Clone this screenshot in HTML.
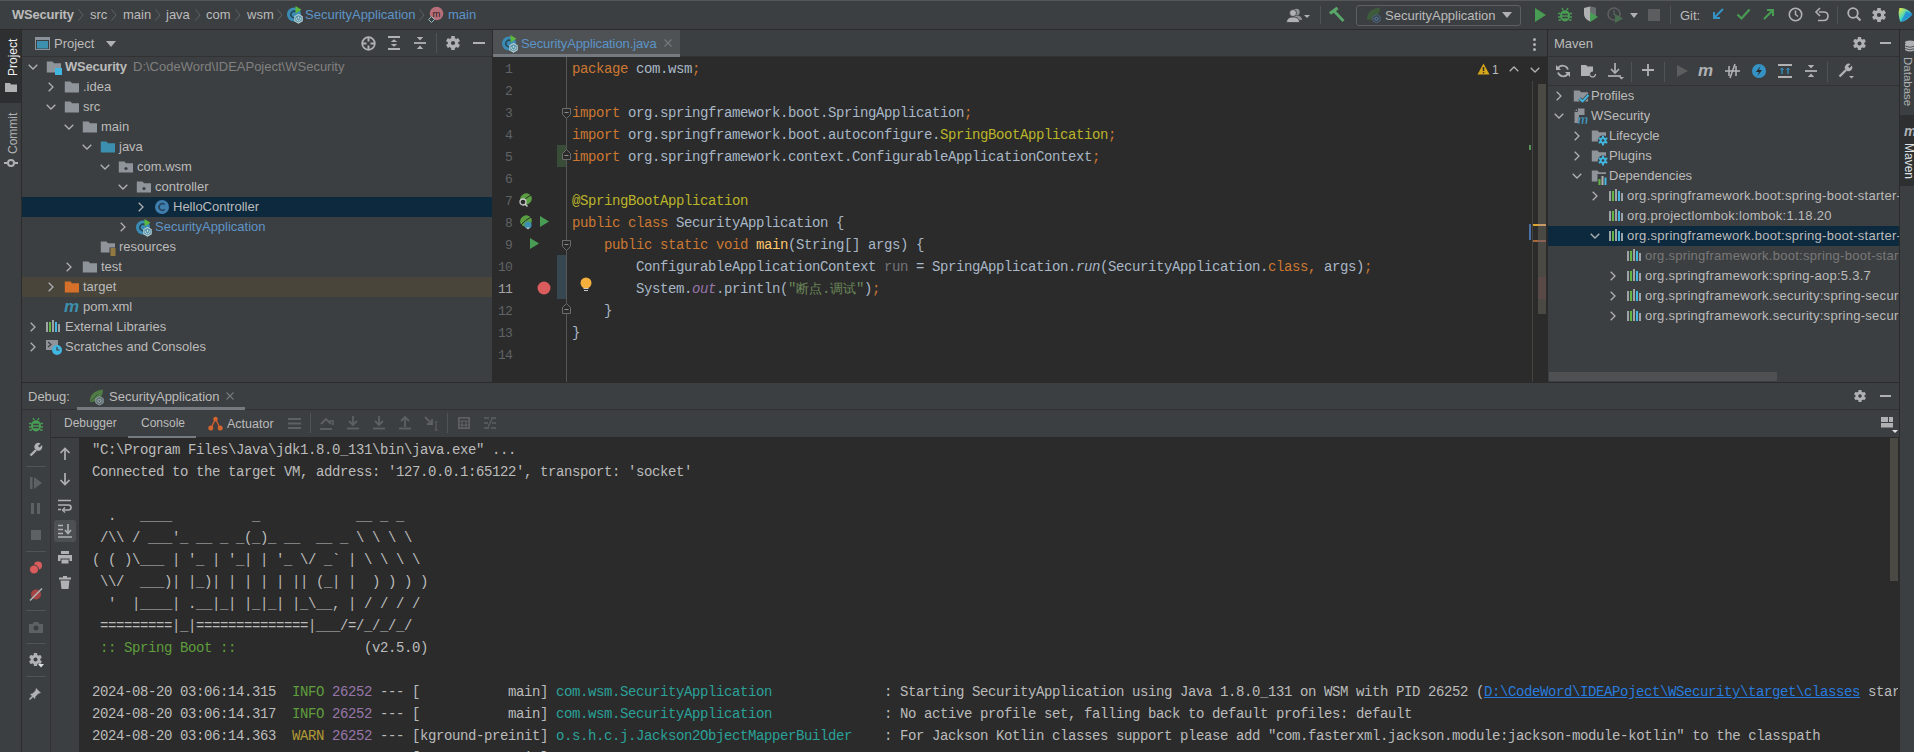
<!DOCTYPE html><html><head><meta charset="utf-8"><style>
html,body{margin:0;padding:0;width:1914px;height:752px;overflow:hidden;background:#3c3f41;}
body>div,body>svg{position:absolute;}
svg{overflow:visible}
</style></head><body>
<div style="left:0px;top:0px;width:1914px;height:752px;background:#3c3f41;"></div>
<div style="left:0px;top:0px;width:1914px;height:1px;background:#545658;"></div>
<div style="left:0px;top:29px;width:1914px;height:1px;background:#2b2b2b;"></div>
<div style="left:21px;top:30px;width:1px;height:722px;background:#2b2b2b;"></div>
<div style="left:0px;top:30px;width:21px;height:73px;background:#2d2f30;"></div>
<div style="left:22px;top:56px;width:470px;height:1px;background:#323232;"></div>
<div style="left:492px;top:30px;width:1px;height:352px;background:#2b2b2b;"></div>
<div style="left:493px;top:57px;width:1055px;height:325px;background:#2b2b2b;"></div>
<div style="left:493px;top:30px;width:1055px;height:27px;background:#3c3f41;"></div>
<div style="left:493px;top:56px;width:1055px;height:1px;background:#323232;"></div>
<div style="left:493px;top:30px;width:187px;height:24px;background:#4e5254;"></div>
<div style="left:493px;top:54px;width:187px;height:3px;background:#747a80;"></div>
<div style="left:1547px;top:30px;width:1px;height:352px;background:#2b2b2b;"></div>
<div style="left:1548px;top:56px;width:351px;height:1px;background:#323232;"></div>
<div style="left:1548px;top:85px;width:351px;height:1px;background:#323232;"></div>
<div style="left:1899px;top:30px;width:1px;height:722px;background:#2b2b2b;"></div>
<div style="left:1900px;top:115px;width:14px;height:71px;background:#2d2f30;"></div>
<div style="left:22px;top:382px;width:1877px;height:1px;background:#2b2b2b;"></div>
<div style="left:22px;top:409px;width:1877px;height:1px;background:#323232;"></div>
<div style="left:50px;top:410px;width:1px;height:342px;background:#323232;"></div>
<div style="left:51px;top:437px;width:1848px;height:1px;background:#2b2b2b;"></div>
<div style="left:79px;top:438px;width:1820px;height:314px;background:#2b2b2b;"></div>
<div style="left:51px;top:438px;width:28px;height:314px;background:#3c3f41;"></div>
<div style="left:12px;top:4.00px;line-height:21px;font-size:13px;font-family:'Liberation Sans', sans-serif;color:#bbbbbb;white-space:pre;font-weight:bold;letter-spacing:-0.2px">WSecurity</div>
<svg style="left:78px;top:9px;" width="6" height="12" viewBox="0 0 6 12"><path d="M0.5 0.5 L5 6.0 L0.5 11.5" fill="none" stroke="#5f6264" stroke-width="1"/></svg>
<div style="left:90px;top:4.00px;line-height:21px;font-size:13px;font-family:'Liberation Sans', sans-serif;color:#bbbbbb;white-space:pre;">src</div>
<svg style="left:111px;top:9px;" width="6" height="12" viewBox="0 0 6 12"><path d="M0.5 0.5 L5 6.0 L0.5 11.5" fill="none" stroke="#5f6264" stroke-width="1"/></svg>
<div style="left:123px;top:4.00px;line-height:21px;font-size:13px;font-family:'Liberation Sans', sans-serif;color:#bbbbbb;white-space:pre;">main</div>
<svg style="left:155px;top:9px;" width="6" height="12" viewBox="0 0 6 12"><path d="M0.5 0.5 L5 6.0 L0.5 11.5" fill="none" stroke="#5f6264" stroke-width="1"/></svg>
<div style="left:166px;top:4.00px;line-height:21px;font-size:13px;font-family:'Liberation Sans', sans-serif;color:#bbbbbb;white-space:pre;">java</div>
<svg style="left:195px;top:9px;" width="6" height="12" viewBox="0 0 6 12"><path d="M0.5 0.5 L5 6.0 L0.5 11.5" fill="none" stroke="#5f6264" stroke-width="1"/></svg>
<div style="left:206px;top:4.00px;line-height:21px;font-size:13px;font-family:'Liberation Sans', sans-serif;color:#bbbbbb;white-space:pre;">com</div>
<svg style="left:235px;top:9px;" width="6" height="12" viewBox="0 0 6 12"><path d="M0.5 0.5 L5 6.0 L0.5 11.5" fill="none" stroke="#5f6264" stroke-width="1"/></svg>
<div style="left:247px;top:4.00px;line-height:21px;font-size:13px;font-family:'Liberation Sans', sans-serif;color:#bbbbbb;white-space:pre;">wsm</div>
<svg style="left:277px;top:9px;" width="6" height="12" viewBox="0 0 6 12"><path d="M0.5 0.5 L5 6.0 L0.5 11.5" fill="none" stroke="#5f6264" stroke-width="1"/></svg>
<svg style="left:287px;top:6px;" width="16" height="16" viewBox="0 0 16 16"><circle cx="7" cy="8.5" r="7" fill="#3b8cb5"/><path d="M9.3 6.2 A3.2 3.2 0 1 0 9.3 10.8" fill="none" stroke="#25475a" stroke-width="1.6"/><path d="M8.5 0 L14.5 3.8 L8.5 7.6 Z" fill="#5bb83e"/><polygon points="11.5,8.5 15.2,10.6 15.2,14.9 11.5,17 7.8,14.9 7.8,10.6" fill="#4f8fa5" stroke="#b5cdd2" stroke-width="1.1"/><path d="M10.2 11.6 A1.9 1.9 0 1 0 12.8 11.6 M11.5 10.6 V12.8" fill="none" stroke="#c8dde0" stroke-width="0.9"/></svg>
<div style="left:305px;top:4.00px;line-height:21px;font-size:13px;font-family:'Liberation Sans', sans-serif;color:#5c94c7;white-space:pre;">SecurityApplication</div>
<svg style="left:419px;top:9px;" width="6" height="12" viewBox="0 0 6 12"><path d="M0.5 0.5 L5 6.0 L0.5 11.5" fill="none" stroke="#5f6264" stroke-width="1"/></svg>
<svg style="left:428px;top:6px;" width="16" height="16" viewBox="0 0 16 16"><circle cx="8.5" cy="7.5" r="6.8" fill="#b86f7a"/><text x="8.5" y="10.8" text-anchor="middle" font-family="Liberation Sans" font-size="9.5" fill="#1e1e1e">m</text><path d="M3.5 10.5 L6.5 13.5 L3.5 16.5 L0.5 13.5 Z" fill="#3c3f41" stroke="#8fc0c0" stroke-width="1"/></svg>
<div style="left:448px;top:4.00px;line-height:21px;font-size:13px;font-family:'Liberation Sans', sans-serif;color:#5c94c7;white-space:pre;">main</div>
<svg style="left:1286px;top:8px;" width="24" height="15" viewBox="0 0 24 15"><circle cx="10.5" cy="4" r="3.2" fill="#8d9092"/><path d="M5 12 Q5 7.5 10.5 7.5 Q16 7.5 16 12 Z" fill="#8d9092"/><circle cx="7" cy="5" r="3.5" fill="#afb1b3" stroke="#3c3f41" stroke-width="0.8"/><path d="M0.5 14.5 Q0.5 9 7 9 Q13.5 9 13.5 14.5 Z" fill="#afb1b3" stroke="#3c3f41" stroke-width="0.8"/><path d="M18 7 L24 7 L21 10 Z" fill="#afb1b3"/></svg>
<div style="left:1320px;top:6px;width:1px;height:18px;background:#515355;"></div>
<svg style="left:1329px;top:7px;" width="16" height="16" viewBox="0 0 16 16"><path d="M1 6.5 L8.5 1" stroke="#59a869" stroke-width="3.2"/><path d="M5 4 L14.5 14" stroke="#59a869" stroke-width="2.6"/></svg>
<div style="left:1356px;top:5px;width:165px;height:21px;background:transparent;border:1px solid #5e6060;box-sizing:border-box;border-radius:3px"></div>
<svg style="left:1366px;top:6px;" width="16" height="17" viewBox="0 0 16 17"><path d="M1 14 C0.5 7 5 2.5 14 1.5 C14 9 9.5 13.5 1 14 Z" fill="#3e5b3b"/><polygon points="10.5,8.5 14.2,10.6 14.2,14.9 10.5,17 6.8,14.9 6.8,10.6" fill="#384554" stroke="#4d6277" stroke-width="1"/><circle cx="10.5" cy="12.8" r="1.6" fill="none" stroke="#6a88a5" stroke-width="0.8"/></svg>
<div style="left:1385px;top:5.00px;line-height:21px;font-size:13px;font-family:'Liberation Sans', sans-serif;color:#bbbbbb;white-space:pre;">SecurityApplication</div>
<svg style="left:1502px;top:12px;" width="10" height="6" viewBox="0 0 10 6"><path d="M0 0 L10 0 L5 6 Z" fill="#afb1b3"/></svg>
<svg style="left:1535px;top:8px;" width="12" height="14" viewBox="0 0 12 14"><path d="M0 0 L11 7 L0 14 Z" fill="#499c54"/></svg>
<svg style="left:1558px;top:7px;" width="14" height="16" viewBox="0 0 14 16"><path d="M4 1 L5.5 3.5 M10 1 L8.5 3.5" stroke="#499c54" stroke-width="1.4"/><ellipse cx="7" cy="8.8" rx="5" ry="5.6" fill="#499c54"/><path d="M0 6.5 H2.5 M11.5 6.5 H14 M0 10 H2.5 M11.5 10 H14 M0.5 13 H3 M11 13 H13.5" stroke="#499c54" stroke-width="1.5"/><path d="M4.2 7.5 H9.8 M4.2 10.5 H9.8" stroke="#3c3f41" stroke-width="1.3"/></svg>
<svg style="left:1583px;top:6px;" width="16" height="17" viewBox="0 0 16 17"><path d="M1 2 L7 0.5 L13 2 L13 8 Q13 13 7 15.5 Q1 13 1 8 Z" fill="#afb1b3"/><path d="M7 0.5 L13 2 L13 8 Q13 13 7 15.5 Z" fill="#3c3f41" opacity="0.6"/><path d="M7 6 L15 11 L7 16 Z" fill="#499c54"/></svg>
<svg style="left:1607px;top:7px;" width="17" height="16" viewBox="0 0 17 16"><circle cx="7" cy="7" r="6" fill="none" stroke="#5c5e60" stroke-width="1.6"/><path d="M7 3 v4 l2 2" stroke="#5c5e60" stroke-width="1.4" fill="none"/><path d="M8 7 L16 11.5 L8 16 Z" fill="#4a6d4f"/></svg>
<svg style="left:1630px;top:13px;" width="8" height="5" viewBox="0 0 8 5"><path d="M0 0 L8 0 L4 5 Z" fill="#afb1b3"/></svg>
<div style="left:1648px;top:9px;width:12px;height:12px;background:#5b5d5f;"></div>
<div style="left:1670px;top:6px;width:1px;height:18px;background:#515355;"></div>
<div style="left:1680px;top:5.00px;line-height:21px;font-size:13px;font-family:'Liberation Sans', sans-serif;color:#bbbbbb;white-space:pre;">Git:</div>
<svg style="left:1711px;top:7px;" width="14" height="14" viewBox="0 0 14 14"><path d="M12 2 L3 11 M3 5 V11 H9" fill="none" stroke="#3592c4" stroke-width="2"/></svg>
<svg style="left:1736px;top:8px;" width="15" height="13" viewBox="0 0 15 13"><path d="M1.5 6.5 L5.5 10.5 L13.5 1.5" fill="none" stroke="#499c54" stroke-width="2.2"/></svg>
<svg style="left:1762px;top:7px;" width="14" height="14" viewBox="0 0 14 14"><path d="M2 12 L11 3 M5 3 H11 V9" fill="none" stroke="#499c54" stroke-width="2"/></svg>
<svg style="left:1788px;top:7px;" width="15" height="15" viewBox="0 0 15 15"><circle cx="7.5" cy="7.5" r="6.2" fill="none" stroke="#afb1b3" stroke-width="1.6"/><path d="M7.5 3.5 V7.5 L10 9.5" fill="none" stroke="#afb1b3" stroke-width="1.5"/></svg>
<svg style="left:1815px;top:7px;" width="14" height="15" viewBox="0 0 14 15"><path d="M4 5 H8.5 Q13 5 13 9 Q13 13.5 8.5 13.5 H3" fill="none" stroke="#afb1b3" stroke-width="1.6"/><path d="M5 1 L1 5 L5 9" fill="none" stroke="#afb1b3" stroke-width="1.6"/></svg>
<div style="left:1837px;top:6px;width:1px;height:18px;background:#515355;"></div>
<svg style="left:1847px;top:7px;" width="14" height="15" viewBox="0 0 14 15"><circle cx="6" cy="6" r="4.8" fill="none" stroke="#afb1b3" stroke-width="1.8"/><path d="M9.5 9.5 L13.5 13.5" stroke="#afb1b3" stroke-width="2.2"/></svg>
<svg style="left:1872px;top:8px;" width="14" height="14" viewBox="0 0 14 14"><rect x="5.18" y="0" width="3.64" height="14" rx="0.6" fill="#afb1b3" transform="rotate(0 7.0 7.0)"/><rect x="5.18" y="0" width="3.64" height="14" rx="0.6" fill="#afb1b3" transform="rotate(60 7.0 7.0)"/><rect x="5.18" y="0" width="3.64" height="14" rx="0.6" fill="#afb1b3" transform="rotate(120 7.0 7.0)"/><circle cx="7.0" cy="7.0" r="5.18" fill="#afb1b3"/><circle cx="7.0" cy="7.0" r="2.10" fill="#3c3f41"/></svg>
<svg style="left:1898px;top:7px;" width="16" height="16" viewBox="0 0 16 16"><defs><linearGradient id="jb1" x1="0" y1="0" x2="1" y2="1"><stop offset="0" stop-color="#f0eb3a"/><stop offset="0.5" stop-color="#3bd3c8"/><stop offset="1" stop-color="#1a6fd6"/></linearGradient></defs><path d="M1.5 1 Q9 0 14.5 7.5 Q9 14 2.5 15 Q-0.5 8 1.5 1 Z" fill="url(#jb1)"/><path d="M8 4 L14.5 7.5 L3 15 Z" fill="#1f7fd8" opacity="0.7"/></svg>
<div style="left:4.5px;top:76px;width:0;height:0;"><div style="position:absolute;left:0;top:0;transform:rotate(-90deg);transform-origin:0 0;font-family:'Liberation Sans';font-size:12px;line-height:16px;color:#f0f0f0;white-space:pre">Project</div></div>
<svg style="left:5px;top:82px;" width="12" height="10" viewBox="0 0 12 10"><path d="M0 1 H5 L6 2.5 H12 V10 H0 Z" fill="#afb1b3"/></svg>
<div style="left:4.5px;top:154px;width:0;height:0;"><div style="position:absolute;left:0;top:0;transform:rotate(-90deg);transform-origin:0 0;font-family:'Liberation Sans';font-size:12px;line-height:16px;color:#afb1b3;white-space:pre">Commit</div></div>
<svg style="left:4px;top:158px;" width="14" height="10" viewBox="0 0 14 10"><circle cx="7" cy="5" r="3" fill="none" stroke="#afb1b3" stroke-width="2"/><path d="M0 5 H3.5 M10.5 5 H14" stroke="#afb1b3" stroke-width="2"/></svg>
<svg style="left:35px;top:37px;" width="15" height="13" viewBox="0 0 15 13"><rect x="0.5" y="0.5" width="14" height="12" fill="none" stroke="#8a9199"/><rect x="0.5" y="0.5" width="14" height="2.5" fill="#8a9199"/><rect x="2" y="4" width="11" height="7.5" fill="#3d8fb0"/></svg>
<div style="left:54px;top:33.00px;line-height:21px;font-size:13px;font-family:'Liberation Sans', sans-serif;color:#bbbbbb;white-space:pre;">Project</div>
<svg style="left:106px;top:41px;" width="10" height="6" viewBox="0 0 10 6"><path d="M0 0 L10 0 L5 6 Z" fill="#afb1b3"/></svg>
<svg style="left:361px;top:36px;" width="15" height="15" viewBox="0 0 15 15"><circle cx="7.5" cy="7.5" r="6.3" fill="none" stroke="#afb1b3" stroke-width="1.8"/><path d="M7.5 1 V5.5 M7.5 9.5 V14 M1 7.5 H5.5 M9.5 7.5 H14" stroke="#afb1b3" stroke-width="2"/></svg>
<svg style="left:388px;top:36px;" width="12" height="14" viewBox="0 0 12 14"><path d="M0 1 H12 M0 13 H12" stroke="#afb1b3" stroke-width="1.8"/><path d="M6 3.2 L9.2 6 H2.8 Z M6 10.8 L9.2 8 H2.8 Z" fill="#afb1b3"/></svg>
<svg style="left:414px;top:36px;" width="12" height="14" viewBox="0 0 12 14"><path d="M0 7 H12" stroke="#afb1b3" stroke-width="1.8"/><path d="M6 4.5 L9.2 1 H2.8 Z M6 9.5 L9.2 13 H2.8 Z" fill="#afb1b3"/></svg>
<div style="left:436px;top:33px;width:1px;height:20px;background:#515355;"></div>
<svg style="left:446px;top:36px;" width="14" height="14" viewBox="0 0 14 14"><rect x="5.18" y="0" width="3.64" height="14" rx="0.6" fill="#afb1b3" transform="rotate(0 7.0 7.0)"/><rect x="5.18" y="0" width="3.64" height="14" rx="0.6" fill="#afb1b3" transform="rotate(60 7.0 7.0)"/><rect x="5.18" y="0" width="3.64" height="14" rx="0.6" fill="#afb1b3" transform="rotate(120 7.0 7.0)"/><circle cx="7.0" cy="7.0" r="5.18" fill="#afb1b3"/><circle cx="7.0" cy="7.0" r="2.10" fill="#3c3f41"/></svg>
<div style="left:473px;top:42px;width:12px;height:2px;background:#afb1b3;"></div>
<svg style="left:28px;top:64px;" width="10" height="6" viewBox="0 0 10 6"><path d="M0.7 0.7 L5 5 L9.3 0.7" fill="none" stroke="#afb1b3" stroke-width="1.3"/></svg>
<svg style="left:46px;top:59px;" width="16" height="16" viewBox="0 0 16 16"><path d="M0.8 2.6 H6.5 L8 4.2 H15 V13.4 H0.8 Z" fill="#8e9499"/><rect x="9" y="9" width="7" height="7" fill="#40b6e0"/></svg>
<div style="left:65px;top:55.80px;line-height:21px;font-size:13px;font-family:'Liberation Sans', sans-serif;color:#bbbbbb;white-space:pre;font-weight:bold;letter-spacing:-0.2px">WSecurity</div>
<div style="left:133px;top:55.80px;line-height:21px;font-size:13px;font-family:'Liberation Sans', sans-serif;color:#808080;white-space:pre;">D:\CodeWord\IDEAPoject\WSecurity</div>
<svg style="left:48px;top:82px;" width="6" height="10" viewBox="0 0 6 10"><path d="M0.7 0.7 L5 5 L0.7 9.3" fill="none" stroke="#afb1b3" stroke-width="1.3"/></svg>
<svg style="left:64px;top:79px;" width="16" height="16" viewBox="0 0 16 16"><path d="M0.8 2.6 H6.5 L8 4.2 H15 V13.4 H0.8 Z" fill="#8e9499"/></svg>
<div style="left:83px;top:75.80px;line-height:21px;font-size:13px;font-family:'Liberation Sans', sans-serif;color:#bbbbbb;white-space:pre;">.idea</div>
<svg style="left:46px;top:104px;" width="10" height="6" viewBox="0 0 10 6"><path d="M0.7 0.7 L5 5 L9.3 0.7" fill="none" stroke="#afb1b3" stroke-width="1.3"/></svg>
<svg style="left:64px;top:99px;" width="16" height="16" viewBox="0 0 16 16"><path d="M0.8 2.6 H6.5 L8 4.2 H15 V13.4 H0.8 Z" fill="#8e9499"/></svg>
<div style="left:83px;top:95.80px;line-height:21px;font-size:13px;font-family:'Liberation Sans', sans-serif;color:#bbbbbb;white-space:pre;">src</div>
<svg style="left:64px;top:124px;" width="10" height="6" viewBox="0 0 10 6"><path d="M0.7 0.7 L5 5 L9.3 0.7" fill="none" stroke="#afb1b3" stroke-width="1.3"/></svg>
<svg style="left:82px;top:119px;" width="16" height="16" viewBox="0 0 16 16"><path d="M0.8 2.6 H6.5 L8 4.2 H15 V13.4 H0.8 Z" fill="#8e9499"/></svg>
<div style="left:101px;top:115.80px;line-height:21px;font-size:13px;font-family:'Liberation Sans', sans-serif;color:#bbbbbb;white-space:pre;">main</div>
<svg style="left:82px;top:144px;" width="10" height="6" viewBox="0 0 10 6"><path d="M0.7 0.7 L5 5 L9.3 0.7" fill="none" stroke="#afb1b3" stroke-width="1.3"/></svg>
<svg style="left:100px;top:139px;" width="16" height="16" viewBox="0 0 16 16"><path d="M0.8 2.6 H6.5 L8 4.2 H15 V13.4 H0.8 Z" fill="#3d8fb0"/></svg>
<div style="left:119px;top:135.80px;line-height:21px;font-size:13px;font-family:'Liberation Sans', sans-serif;color:#bbbbbb;white-space:pre;">java</div>
<svg style="left:100px;top:164px;" width="10" height="6" viewBox="0 0 10 6"><path d="M0.7 0.7 L5 5 L9.3 0.7" fill="none" stroke="#afb1b3" stroke-width="1.3"/></svg>
<svg style="left:118px;top:159px;" width="16" height="16" viewBox="0 0 16 16"><path d="M0.8 2.6 H6.5 L8 4.2 H15 V13.4 H0.8 Z" fill="#8e9499"/><circle cx="8" cy="9.5" r="1.6" fill="#3c3f41"/></svg>
<div style="left:137px;top:155.80px;line-height:21px;font-size:13px;font-family:'Liberation Sans', sans-serif;color:#bbbbbb;white-space:pre;">com.wsm</div>
<svg style="left:118px;top:184px;" width="10" height="6" viewBox="0 0 10 6"><path d="M0.7 0.7 L5 5 L9.3 0.7" fill="none" stroke="#afb1b3" stroke-width="1.3"/></svg>
<svg style="left:136px;top:179px;" width="16" height="16" viewBox="0 0 16 16"><path d="M0.8 2.6 H6.5 L8 4.2 H15 V13.4 H0.8 Z" fill="#8e9499"/><circle cx="8" cy="9.5" r="1.6" fill="#3c3f41"/></svg>
<div style="left:155px;top:175.80px;line-height:21px;font-size:13px;font-family:'Liberation Sans', sans-serif;color:#bbbbbb;white-space:pre;">controller</div>
<div style="left:22px;top:197px;width:470px;height:20px;background:#0d293e;"></div>
<svg style="left:138px;top:202px;" width="6" height="10" viewBox="0 0 6 10"><path d="M0.7 0.7 L5 5 L0.7 9.3" fill="none" stroke="#afb1b3" stroke-width="1.3"/></svg>
<svg style="left:154px;top:199px;" width="16" height="16" viewBox="0 0 16 16"><circle cx="8" cy="8" r="7" fill="#3f7eae"/><path d="M10.6 5.6 A3.3 3.3 0 1 0 10.6 10.4" fill="none" stroke="#22405a" stroke-width="1.5"/></svg>
<div style="left:173px;top:195.80px;line-height:21px;font-size:13px;font-family:'Liberation Sans', sans-serif;color:#bbbbbb;white-space:pre;">HelloController</div>
<svg style="left:120px;top:222px;" width="6" height="10" viewBox="0 0 6 10"><path d="M0.7 0.7 L5 5 L0.7 9.3" fill="none" stroke="#afb1b3" stroke-width="1.3"/></svg>
<svg style="left:136px;top:219px;" width="16" height="16" viewBox="0 0 16 16"><circle cx="7" cy="8.5" r="7" fill="#3b8cb5"/><path d="M9.3 6.2 A3.2 3.2 0 1 0 9.3 10.8" fill="none" stroke="#25475a" stroke-width="1.6"/><path d="M8.5 0 L14.5 3.8 L8.5 7.6 Z" fill="#5bb83e"/><polygon points="11.5,8.5 15.2,10.6 15.2,14.9 11.5,17 7.8,14.9 7.8,10.6" fill="#4f8fa5" stroke="#b5cdd2" stroke-width="1.1"/><path d="M10.2 11.6 A1.9 1.9 0 1 0 12.8 11.6 M11.5 10.6 V12.8" fill="none" stroke="#c8dde0" stroke-width="0.9"/></svg>
<div style="left:155px;top:215.80px;line-height:21px;font-size:13px;font-family:'Liberation Sans', sans-serif;color:#5c94c7;white-space:pre;">SecurityApplication</div>
<svg style="left:100px;top:239px;" width="16" height="16" viewBox="0 0 16 16"><path d="M0.8 2.6 H6.5 L8 4.2 H15 V13.4 H0.8 Z" fill="#8e9499"/><rect x="9.5" y="8.5" width="6.5" height="7.5" fill="#3c3f41"/><path d="M10.5 10h5M10.5 12h5M10.5 14h5M10.5 16h5" stroke="#e8b442" stroke-width="1"/></svg>
<div style="left:119px;top:235.80px;line-height:21px;font-size:13px;font-family:'Liberation Sans', sans-serif;color:#bbbbbb;white-space:pre;">resources</div>
<svg style="left:66px;top:262px;" width="6" height="10" viewBox="0 0 6 10"><path d="M0.7 0.7 L5 5 L0.7 9.3" fill="none" stroke="#afb1b3" stroke-width="1.3"/></svg>
<svg style="left:82px;top:259px;" width="16" height="16" viewBox="0 0 16 16"><path d="M0.8 2.6 H6.5 L8 4.2 H15 V13.4 H0.8 Z" fill="#8e9499"/></svg>
<div style="left:101px;top:255.80px;line-height:21px;font-size:13px;font-family:'Liberation Sans', sans-serif;color:#bbbbbb;white-space:pre;">test</div>
<div style="left:22px;top:277px;width:470px;height:20px;background:#49453b;"></div>
<svg style="left:48px;top:282px;" width="6" height="10" viewBox="0 0 6 10"><path d="M0.7 0.7 L5 5 L0.7 9.3" fill="none" stroke="#afb1b3" stroke-width="1.3"/></svg>
<svg style="left:64px;top:279px;" width="16" height="16" viewBox="0 0 16 16"><path d="M0.8 2.6 H6.5 L8 4.2 H15 V13.4 H0.8 Z" fill="#d5702b"/></svg>
<div style="left:83px;top:275.80px;line-height:21px;font-size:13px;font-family:'Liberation Sans', sans-serif;color:#bbbbbb;white-space:pre;">target</div>
<svg style="left:64px;top:299px;" width="16" height="16" viewBox="0 0 16 16"><text x="0" y="13" font-family="Liberation Sans" font-style="italic" font-weight="bold" font-size="17" fill="#3d8fb0">m</text></svg>
<div style="left:83px;top:295.80px;line-height:21px;font-size:13px;font-family:'Liberation Sans', sans-serif;color:#bbbbbb;white-space:pre;">pom.xml</div>
<svg style="left:30px;top:322px;" width="6" height="10" viewBox="0 0 6 10"><path d="M0.7 0.7 L5 5 L0.7 9.3" fill="none" stroke="#afb1b3" stroke-width="1.3"/></svg>
<svg style="left:46px;top:319px;" width="16" height="16" viewBox="0 0 16 16"><rect x="0" y="3" width="2" height="10" fill="#9ea3a8"/><rect x="3" y="3" width="2" height="10" fill="#62b543"/><rect x="6" y="1" width="2" height="12" fill="#9ea3a8"/><rect x="9" y="3" width="2" height="10" fill="#40b6e0"/><rect x="12" y="5" width="2" height="8" fill="#9ea3a8"/></svg>
<div style="left:65px;top:315.80px;line-height:21px;font-size:13px;font-family:'Liberation Sans', sans-serif;color:#bbbbbb;white-space:pre;">External Libraries</div>
<svg style="left:30px;top:342px;" width="6" height="10" viewBox="0 0 6 10"><path d="M0.7 0.7 L5 5 L0.7 9.3" fill="none" stroke="#afb1b3" stroke-width="1.3"/></svg>
<svg style="left:46px;top:339px;" width="16" height="16" viewBox="0 0 16 16"><rect x="0" y="1" width="12" height="10" fill="#8e9499"/><path d="M2 3 L5 5.5 L2 8" stroke="#3c3f41" stroke-width="1.2" fill="none"/><circle cx="11" cy="11" r="5" fill="#40b6e0"/><path d="M11 8 V11 H13.5" stroke="#3c3f41" stroke-width="1.2" fill="none"/></svg>
<div style="left:65px;top:335.80px;line-height:21px;font-size:13px;font-family:'Liberation Sans', sans-serif;color:#bbbbbb;white-space:pre;">Scratches and Consoles</div>
<div style="left:521px;top:33.00px;line-height:21px;font-size:13px;font-family:'Liberation Sans', sans-serif;color:#5c94c7;white-space:pre;letter-spacing:-0.1px">SecurityApplication.java</div>
<svg style="left:502px;top:35px;" width="16" height="16" viewBox="0 0 16 16"><circle cx="7" cy="8.5" r="7" fill="#3b8cb5"/><path d="M9.3 6.2 A3.2 3.2 0 1 0 9.3 10.8" fill="none" stroke="#25475a" stroke-width="1.6"/><path d="M8.5 0 L14.5 3.8 L8.5 7.6 Z" fill="#5bb83e"/><polygon points="11.5,8.5 15.2,10.6 15.2,14.9 11.5,17 7.8,14.9 7.8,10.6" fill="#4f8fa5" stroke="#b5cdd2" stroke-width="1.1"/><path d="M10.2 11.6 A1.9 1.9 0 1 0 12.8 11.6 M11.5 10.6 V12.8" fill="none" stroke="#c8dde0" stroke-width="0.9"/></svg>
<svg style="left:664px;top:39px;" width="8" height="8" viewBox="0 0 8 8"><path d="M0.5 0.5 L7.5 7.5 M7.5 0.5 L0.5 7.5" stroke="#767a7c" stroke-width="1.1"/></svg>
<div style="left:1533px;top:38px;width:3px;height:3px;background:#afb1b3;border-radius:1.5px"></div>
<div style="left:1533px;top:43px;width:3px;height:3px;background:#afb1b3;border-radius:1.5px"></div>
<div style="left:1533px;top:48px;width:3px;height:3px;background:#afb1b3;border-radius:1.5px"></div>
<div style="left:566px;top:57px;width:1px;height:325px;background:#555555;"></div>
<div style="left:557px;top:145px;width:9px;height:22px;background:#384c38;"></div>
<div style="left:557px;top:255px;width:9px;height:44px;background:#374752;"></div>
<div style="left:572px;top:58.27px;line-height:22px;font-size:14px;font-family:'Liberation Mono', monospace;color:#cc7832;white-space:pre;letter-spacing:-0.4px;">package</div>
<div style="left:628px;top:58.27px;line-height:22px;font-size:14px;font-family:'Liberation Mono', monospace;color:#a9b7c6;white-space:pre;letter-spacing:-0.4px;"> com.wsm</div>
<div style="left:692px;top:58.27px;line-height:22px;font-size:14px;font-family:'Liberation Mono', monospace;color:#cc7832;white-space:pre;letter-spacing:-0.4px;">;</div>
<div style="left:572px;top:102.27px;line-height:22px;font-size:14px;font-family:'Liberation Mono', monospace;color:#cc7832;white-space:pre;letter-spacing:-0.4px;">import</div>
<div style="left:620px;top:102.27px;line-height:22px;font-size:14px;font-family:'Liberation Mono', monospace;color:#a9b7c6;white-space:pre;letter-spacing:-0.4px;"> org.springframework.boot.SpringApplication</div>
<div style="left:964px;top:102.27px;line-height:22px;font-size:14px;font-family:'Liberation Mono', monospace;color:#cc7832;white-space:pre;letter-spacing:-0.4px;">;</div>
<div style="left:572px;top:124.27px;line-height:22px;font-size:14px;font-family:'Liberation Mono', monospace;color:#cc7832;white-space:pre;letter-spacing:-0.4px;">import</div>
<div style="left:620px;top:124.27px;line-height:22px;font-size:14px;font-family:'Liberation Mono', monospace;color:#a9b7c6;white-space:pre;letter-spacing:-0.4px;"> org.springframework.boot.autoconfigure.</div>
<div style="left:940px;top:124.27px;line-height:22px;font-size:14px;font-family:'Liberation Mono', monospace;color:#bbb529;white-space:pre;letter-spacing:-0.4px;">SpringBootApplication</div>
<div style="left:1108px;top:124.27px;line-height:22px;font-size:14px;font-family:'Liberation Mono', monospace;color:#cc7832;white-space:pre;letter-spacing:-0.4px;">;</div>
<div style="left:572px;top:146.27px;line-height:22px;font-size:14px;font-family:'Liberation Mono', monospace;color:#cc7832;white-space:pre;letter-spacing:-0.4px;">import</div>
<div style="left:620px;top:146.27px;line-height:22px;font-size:14px;font-family:'Liberation Mono', monospace;color:#a9b7c6;white-space:pre;letter-spacing:-0.4px;"> org.springframework.context.ConfigurableApplicationContext</div>
<div style="left:1092px;top:146.27px;line-height:22px;font-size:14px;font-family:'Liberation Mono', monospace;color:#cc7832;white-space:pre;letter-spacing:-0.4px;">;</div>
<div style="left:572px;top:190.27px;line-height:22px;font-size:14px;font-family:'Liberation Mono', monospace;color:#bbb529;white-space:pre;letter-spacing:-0.4px;">@SpringBootApplication</div>
<div style="left:572px;top:212.27px;line-height:22px;font-size:14px;font-family:'Liberation Mono', monospace;color:#cc7832;white-space:pre;letter-spacing:-0.4px;">public class</div>
<div style="left:668px;top:212.27px;line-height:22px;font-size:14px;font-family:'Liberation Mono', monospace;color:#a9b7c6;white-space:pre;letter-spacing:-0.4px;"> SecurityApplication {</div>
<div style="left:572px;top:234.27px;line-height:22px;font-size:14px;font-family:'Liberation Mono', monospace;color:#cc7832;white-space:pre;letter-spacing:-0.4px;">    public static void</div>
<div style="left:748px;top:234.27px;line-height:22px;font-size:14px;font-family:'Liberation Mono', monospace;color:#a9b7c6;white-space:pre;letter-spacing:-0.4px;"> </div>
<div style="left:756px;top:234.27px;line-height:22px;font-size:14px;font-family:'Liberation Mono', monospace;color:#ffc66d;white-space:pre;letter-spacing:-0.4px;">main</div>
<div style="left:788px;top:234.27px;line-height:22px;font-size:14px;font-family:'Liberation Mono', monospace;color:#a9b7c6;white-space:pre;letter-spacing:-0.4px;">(String[] args) {</div>
<div style="left:572px;top:256.27px;line-height:22px;font-size:14px;font-family:'Liberation Mono', monospace;color:#a9b7c6;white-space:pre;letter-spacing:-0.4px;">        ConfigurableApplicationContext </div>
<div style="left:884px;top:256.27px;line-height:22px;font-size:14px;font-family:'Liberation Mono', monospace;color:#72737a;white-space:pre;letter-spacing:-0.4px;">run</div>
<div style="left:908px;top:256.27px;line-height:22px;font-size:14px;font-family:'Liberation Mono', monospace;color:#a9b7c6;white-space:pre;letter-spacing:-0.4px;"> = SpringApplication.</div>
<div style="left:1076px;top:256.27px;line-height:22px;font-size:14px;font-family:'Liberation Mono', monospace;color:#a9b7c6;white-space:pre;letter-spacing:-0.4px;font-style:italic">run</div>
<div style="left:1100px;top:256.27px;line-height:22px;font-size:14px;font-family:'Liberation Mono', monospace;color:#a9b7c6;white-space:pre;letter-spacing:-0.4px;">(SecurityApplication.</div>
<div style="left:1268px;top:256.27px;line-height:22px;font-size:14px;font-family:'Liberation Mono', monospace;color:#cc7832;white-space:pre;letter-spacing:-0.4px;">class</div>
<div style="left:1308px;top:256.27px;line-height:22px;font-size:14px;font-family:'Liberation Mono', monospace;color:#cc7832;white-space:pre;letter-spacing:-0.4px;">,</div>
<div style="left:1316px;top:256.27px;line-height:22px;font-size:14px;font-family:'Liberation Mono', monospace;color:#a9b7c6;white-space:pre;letter-spacing:-0.4px;"> args)</div>
<div style="left:1364px;top:256.27px;line-height:22px;font-size:14px;font-family:'Liberation Mono', monospace;color:#cc7832;white-space:pre;letter-spacing:-0.4px;">;</div>
<div style="left:572px;top:278.27px;line-height:22px;font-size:14px;font-family:'Liberation Mono', monospace;color:#a9b7c6;white-space:pre;letter-spacing:-0.4px;">        System.</div>
<div style="left:692px;top:278.27px;line-height:22px;font-size:14px;font-family:'Liberation Mono', monospace;color:#9876aa;white-space:pre;letter-spacing:-0.4px;font-style:italic">out</div>
<div style="left:716px;top:278.27px;line-height:22px;font-size:14px;font-family:'Liberation Mono', monospace;color:#a9b7c6;white-space:pre;letter-spacing:-0.4px;">.println(</div>
<div style="left:788px;top:278.27px;line-height:22px;font-size:14px;font-family:'Liberation Mono', monospace;color:#6a8759;white-space:pre;letter-spacing:-0.4px;">&quot;</div>
<div style="left:796px;top:278.00px;line-height:21px;font-size:13px;font-family:'Liberation Sans', sans-serif;color:#6a8759;white-space:pre;">断</div>
<div style="left:809px;top:278.00px;line-height:21px;font-size:13px;font-family:'Liberation Sans', sans-serif;color:#6a8759;white-space:pre;">点</div>
<div style="left:830px;top:278.00px;line-height:21px;font-size:13px;font-family:'Liberation Sans', sans-serif;color:#6a8759;white-space:pre;">调</div>
<div style="left:843px;top:278.00px;line-height:21px;font-size:13px;font-family:'Liberation Sans', sans-serif;color:#6a8759;white-space:pre;">试</div>
<div style="left:822px;top:278.27px;line-height:22px;font-size:14px;font-family:'Liberation Mono', monospace;color:#6a8759;white-space:pre;letter-spacing:-0.4px">.</div>
<div style="left:856px;top:278.27px;line-height:22px;font-size:14px;font-family:'Liberation Mono', monospace;color:#6a8759;white-space:pre;letter-spacing:-0.4px">&quot;</div>
<div style="left:864px;top:278.27px;line-height:22px;font-size:14px;font-family:'Liberation Mono', monospace;color:#a9b7c6;white-space:pre;letter-spacing:-0.4px">)</div>
<div style="left:872px;top:278.27px;line-height:22px;font-size:14px;font-family:'Liberation Mono', monospace;color:#cc7832;white-space:pre;letter-spacing:-0.4px">;</div>
<div style="left:572px;top:300.27px;line-height:22px;font-size:14px;font-family:'Liberation Mono', monospace;color:#a9b7c6;white-space:pre;letter-spacing:-0.4px;">    }</div>
<div style="left:572px;top:322.27px;line-height:22px;font-size:14px;font-family:'Liberation Mono', monospace;color:#a9b7c6;white-space:pre;letter-spacing:-0.4px;">}</div>
<div style="left:480px;top:62.54px;width:32px;text-align:right;line-height:14px;font-size:13px;font-family:'Liberation Mono', monospace;letter-spacing:-0.8px;color:#606366">1</div>
<div style="left:480px;top:84.54px;width:32px;text-align:right;line-height:14px;font-size:13px;font-family:'Liberation Mono', monospace;letter-spacing:-0.8px;color:#606366">2</div>
<div style="left:480px;top:106.54px;width:32px;text-align:right;line-height:14px;font-size:13px;font-family:'Liberation Mono', monospace;letter-spacing:-0.8px;color:#606366">3</div>
<div style="left:480px;top:128.54px;width:32px;text-align:right;line-height:14px;font-size:13px;font-family:'Liberation Mono', monospace;letter-spacing:-0.8px;color:#606366">4</div>
<div style="left:480px;top:150.54px;width:32px;text-align:right;line-height:14px;font-size:13px;font-family:'Liberation Mono', monospace;letter-spacing:-0.8px;color:#606366">5</div>
<div style="left:480px;top:172.54px;width:32px;text-align:right;line-height:14px;font-size:13px;font-family:'Liberation Mono', monospace;letter-spacing:-0.8px;color:#606366">6</div>
<div style="left:480px;top:194.54px;width:32px;text-align:right;line-height:14px;font-size:13px;font-family:'Liberation Mono', monospace;letter-spacing:-0.8px;color:#606366">7</div>
<div style="left:480px;top:216.54px;width:32px;text-align:right;line-height:14px;font-size:13px;font-family:'Liberation Mono', monospace;letter-spacing:-0.8px;color:#606366">8</div>
<div style="left:480px;top:238.54px;width:32px;text-align:right;line-height:14px;font-size:13px;font-family:'Liberation Mono', monospace;letter-spacing:-0.8px;color:#606366">9</div>
<div style="left:480px;top:260.54px;width:32px;text-align:right;line-height:14px;font-size:13px;font-family:'Liberation Mono', monospace;letter-spacing:-0.8px;color:#606366">10</div>
<div style="left:480px;top:282.54px;width:32px;text-align:right;line-height:14px;font-size:13px;font-family:'Liberation Mono', monospace;letter-spacing:-0.8px;color:#a4a3a3">11</div>
<div style="left:480px;top:304.54px;width:32px;text-align:right;line-height:14px;font-size:13px;font-family:'Liberation Mono', monospace;letter-spacing:-0.8px;color:#606366">12</div>
<div style="left:480px;top:326.54px;width:32px;text-align:right;line-height:14px;font-size:13px;font-family:'Liberation Mono', monospace;letter-spacing:-0.8px;color:#606366">13</div>
<div style="left:480px;top:348.54px;width:32px;text-align:right;line-height:14px;font-size:13px;font-family:'Liberation Mono', monospace;letter-spacing:-0.8px;color:#606366">14</div>
<svg style="left:562px;top:108px;" width="9" height="11" viewBox="0 0 9 11"><path d="M0.5 0.5 H8.5 V6.5 L4.5 10.5 L0.5 6.5 Z" fill="#2b2b2b" stroke="#6c6c6c" stroke-width="1"/><path d="M2.5 4.5 H6.5" stroke="#8c8c8c" stroke-width="1"/></svg>
<svg style="left:562px;top:149px;" width="9" height="11" viewBox="0 0 9 11"><path d="M0.5 10.5 H8.5 V4.5 L4.5 0.5 L0.5 4.5 Z" fill="#2b2b2b" stroke="#6c6c6c" stroke-width="1"/><path d="M2.5 6.5 H6.5" stroke="#8c8c8c" stroke-width="1"/></svg>
<svg style="left:562px;top:240px;" width="9" height="11" viewBox="0 0 9 11"><path d="M0.5 0.5 H8.5 V6.5 L4.5 10.5 L0.5 6.5 Z" fill="#2b2b2b" stroke="#6c6c6c" stroke-width="1"/><path d="M2.5 4.5 H6.5" stroke="#8c8c8c" stroke-width="1"/></svg>
<svg style="left:562px;top:303px;" width="9" height="11" viewBox="0 0 9 11"><path d="M0.5 10.5 H8.5 V4.5 L4.5 0.5 L0.5 4.5 Z" fill="#2b2b2b" stroke="#6c6c6c" stroke-width="1"/><path d="M2.5 6.5 H6.5" stroke="#8c8c8c" stroke-width="1"/></svg>
<svg style="left:518px;top:193px;" width="14" height="14" viewBox="0 0 14 14"><ellipse cx="8" cy="6" rx="6" ry="5.5" fill="#5a9e42" transform="rotate(-30 8 6)"/><path d="M3 10 Q7 5 13 2" stroke="#2b2b2b" stroke-width="1" fill="none"/><circle cx="5" cy="9" r="3" fill="#2b2b2b" stroke="#c8c8c8" stroke-width="1.3"/><path d="M7 11 L9.5 13.5" stroke="#c8c8c8" stroke-width="1.5"/></svg>
<svg style="left:518px;top:215px;" width="14" height="14" viewBox="0 0 14 14"><ellipse cx="8" cy="6" rx="6" ry="5.5" fill="#5a9e42" transform="rotate(-30 8 6)"/><path d="M3 10 Q7 5 13 2" stroke="#2b2b2b" stroke-width="1" fill="none"/><circle cx="10" cy="10" r="3.6" fill="#3d8fb0"/><path d="M8 12.5 L12 12.5 L10 14.5Z" fill="#c8c8c8"/></svg>
<svg style="left:540px;top:216px;" width="9" height="11" viewBox="0 0 9 11"><path d="M0 0 L9 5.5 L0 11 Z" fill="#499c54"/></svg>
<svg style="left:530px;top:238px;" width="9" height="11" viewBox="0 0 9 11"><path d="M0 0 L9 5.5 L0 11 Z" fill="#499c54"/></svg>
<svg style="left:537px;top:281px;" width="14" height="14" viewBox="0 0 14 14"><circle cx="7" cy="7" r="6.5" fill="#db5c5c"/></svg>
<svg style="left:580px;top:277px;" width="12" height="15" viewBox="0 0 12 15"><circle cx="6" cy="6" r="5.5" fill="#f4af3d"/><path d="M3.5 11 H8.5 V12 H3.5 Z M4 13 H8 V14 H4 Z" fill="#c8c8c8"/></svg>
<svg style="left:1477px;top:63px;" width="13" height="12" viewBox="0 0 13 12"><path d="M6.5 0.5 L12.5 11.5 H0.5 Z" fill="#d6a619"/><path d="M6.5 4 V8" stroke="#2b2b2b" stroke-width="1.5"/><circle cx="6.5" cy="9.8" r="0.8" fill="#2b2b2b"/></svg>
<div style="left:1492px;top:61.34px;line-height:19px;font-size:12px;font-family:'Liberation Sans', sans-serif;color:#bbbbbb;white-space:pre;">1</div>
<svg style="left:1509px;top:66px;" width="10" height="6" viewBox="0 0 10 6"><path d="M0.7 5.3 L5 1 L9.3 5.3" fill="none" stroke="#afb1b3" stroke-width="1.3"/></svg>
<svg style="left:1530px;top:67px;" width="10" height="6" viewBox="0 0 10 6"><path d="M0.7 0.7 L5 5 L9.3 0.7" fill="none" stroke="#afb1b3" stroke-width="1.3"/></svg>
<div style="left:1532px;top:81px;width:1px;height:301px;background:#46443f;"></div>
<div style="left:1538px;top:84px;width:8px;height:230px;background:#4b4943;"></div>
<div style="left:1529px;top:145px;width:2px;height:5px;background:#549159;"></div>
<div style="left:1529px;top:224px;width:2px;height:16px;background:#4a6fa5;"></div>
<div style="left:1533px;top:224px;width:5px;height:2px;background:#d9a72c;"></div>
<div style="left:1538px;top:224px;width:8px;height:2px;background:#c89a68;"></div>
<div style="left:1533px;top:240px;width:5px;height:2px;background:#a4683a;"></div>
<div style="left:1538px;top:240px;width:8px;height:2px;background:#8a6256;"></div>
<div style="left:1538px;top:277px;width:8px;height:22px;background:#584846;"></div>
<div style="left:1554px;top:33.00px;line-height:21px;font-size:13px;font-family:'Liberation Sans', sans-serif;color:#bbbbbb;white-space:pre;">Maven</div>
<svg style="left:1853px;top:37px;" width="13" height="13" viewBox="0 0 13 13"><rect x="4.81" y="0" width="3.38" height="13" rx="0.6" fill="#afb1b3" transform="rotate(0 6.5 6.5)"/><rect x="4.81" y="0" width="3.38" height="13" rx="0.6" fill="#afb1b3" transform="rotate(60 6.5 6.5)"/><rect x="4.81" y="0" width="3.38" height="13" rx="0.6" fill="#afb1b3" transform="rotate(120 6.5 6.5)"/><circle cx="6.5" cy="6.5" r="4.81" fill="#afb1b3"/><circle cx="6.5" cy="6.5" r="1.95" fill="#3c3f41"/></svg>
<div style="left:1880px;top:42px;width:11px;height:2px;background:#afb1b3;"></div>
<svg style="left:1556px;top:64px;" width="14" height="14" viewBox="0 0 14 14"><path d="M12 5.5 A5.5 5.5 0 0 0 2 4.5" fill="none" stroke="#afb1b3" stroke-width="1.7"/><path d="M2 8.5 A5.5 5.5 0 0 0 12 9.5" fill="none" stroke="#afb1b3" stroke-width="1.7"/><path d="M0 1 V6 H5 Z" fill="#afb1b3"/><path d="M14 13 V8 H9 Z" fill="#afb1b3"/></svg>
<svg style="left:1581px;top:64px;" width="16" height="15" viewBox="0 0 16 15"><path d="M0 1 H5 L6.5 2.5 H12 V7 A4 4 0 0 0 8 12 H0 Z" fill="#afb1b3"/><path d="M14.5 10 A3 3 0 1 1 12 7" fill="none" stroke="#afb1b3" stroke-width="1.3"/></svg>
<svg style="left:1608px;top:63px;" width="16" height="16" viewBox="0 0 16 16"><path d="M7 0 V9" stroke="#afb1b3" stroke-width="1.7"/><path d="M3 6 L7 10 L11 6" fill="none" stroke="#afb1b3" stroke-width="1.7"/><path d="M0 13 H13" stroke="#afb1b3" stroke-width="1.7"/><path d="M11 14 H16 L13.5 16.5 Z" fill="#afb1b3"/></svg>
<div style="left:1631px;top:62px;width:1px;height:20px;background:#515355;"></div>
<svg style="left:1642px;top:64px;" width="12" height="12" viewBox="0 0 12 12"><path d="M6 0 V12 M0 6 H12" stroke="#afb1b3" stroke-width="1.8"/></svg>
<div style="left:1664px;top:62px;width:1px;height:20px;background:#515355;"></div>
<svg style="left:1677px;top:65px;" width="11" height="12" viewBox="0 0 11 12"><path d="M0 0 L11 6 L0 12 Z" fill="#5b5d5f"/></svg>
<div style="left:1698px;top:62px;font-family:'Liberation Sans', sans-serif;font-size:17px;line-height:18px;font-style:italic;font-weight:bold;color:#afb1b3">m</div>
<svg style="left:1725px;top:64px;" width="15" height="14" viewBox="0 0 15 14"><path d="M0 7 H15" stroke="#afb1b3" stroke-width="1.6"/><path d="M4 2 V12 M11 2 V12" stroke="#afb1b3" stroke-width="1.6"/><path d="M10 0 L5 14" stroke="#afb1b3" stroke-width="1.6"/></svg>
<svg style="left:1752px;top:64px;" width="14" height="14" viewBox="0 0 14 14"><circle cx="7" cy="7" r="7" fill="#3592c4"/><path d="M8.5 2 L4 8 H7 L5.5 12 L10 6 H7 Z" fill="#2b2b2b"/></svg>
<svg style="left:1778px;top:64px;" width="14" height="14" viewBox="0 0 14 14"><rect x="0" y="0" width="14" height="2" fill="#afb1b3"/><rect x="0" y="12" width="14" height="2" fill="#afb1b3"/><path d="M4 4 V10 M10 4 V10" stroke="#3592c4" stroke-width="1.3"/><path d="M2.5 6 L4 4 L5.5 6 M8.5 6 L10 4 L11.5 6" fill="none" stroke="#3592c4" stroke-width="1"/></svg>
<svg style="left:1805px;top:64px;" width="12" height="14" viewBox="0 0 12 14"><path d="M0 7 H12" stroke="#afb1b3" stroke-width="1.8"/><path d="M6 4.5 L9.2 1 H2.8 Z M6 9.5 L9.2 13 H2.8 Z" fill="#afb1b3"/></svg>
<div style="left:1827px;top:62px;width:1px;height:20px;background:#515355;"></div>
<svg style="left:1838px;top:63px;" width="16" height="16" viewBox="0 0 16 16"><path d="M1.5 13.5 L8 7" stroke="#afb1b3" stroke-width="2.4"/><path d="M7 6 A4 4 0 0 1 12.5 1 L10 3.5 L11.5 5 L14 2.5 A4 4 0 0 1 9 8 Z" fill="#afb1b3"/><path d="M11 13 H16 L13.5 15.5 Z" fill="#afb1b3"/></svg>
<svg style="left:1556px;top:91px;" width="6" height="10" viewBox="0 0 6 10"><path d="M0.7 0.7 L5 5 L0.7 9.3" fill="none" stroke="#afb1b3" stroke-width="1.3"/></svg>
<svg style="left:1573px;top:88px;" width="16" height="16" viewBox="0 0 16 16"><path d="M0.8 2.6 H6.5 L8 4.2 H15 V13.4 H0.8 Z" fill="#8e9499"/><path d="M6.5 10.5 L9.5 13.5 L15.5 7" fill="none" stroke="#3c3f41" stroke-width="3.4"/><path d="M6.5 10.5 L9.5 13.5 L15.5 7" fill="none" stroke="#40b6e0" stroke-width="1.9"/></svg>
<div style="left:1591px;top:84.80px;line-height:21px;font-size:13px;font-family:'Liberation Sans', sans-serif;color:#bbbbbb;white-space:pre;max-width:308px;overflow:hidden;letter-spacing:0px">Profiles</div>
<svg style="left:1554px;top:113px;" width="10" height="6" viewBox="0 0 10 6"><path d="M0.7 0.7 L5 5 L9.3 0.7" fill="none" stroke="#afb1b3" stroke-width="1.3"/></svg>
<svg style="left:1573px;top:108px;" width="16" height="16" viewBox="0 0 16 16"><path d="M4.5 0.5 H11.5 V7 H6 V15 H1.5 V3.5 Z" fill="#8e9499"/><path d="M1.5 3.5 H4.5 V0.5" fill="none" stroke="#3c3f41" stroke-width="1"/><text x="4.5" y="15.5" font-family="Liberation Sans" font-style="italic" font-weight="bold" font-size="12" fill="#40a6d8" stroke="#3c3f41" stroke-width="0.4">m</text></svg>
<div style="left:1591px;top:104.80px;line-height:21px;font-size:13px;font-family:'Liberation Sans', sans-serif;color:#bbbbbb;white-space:pre;max-width:308px;overflow:hidden;letter-spacing:0px">WSecurity</div>
<svg style="left:1574px;top:131px;" width="6" height="10" viewBox="0 0 6 10"><path d="M0.7 0.7 L5 5 L0.7 9.3" fill="none" stroke="#afb1b3" stroke-width="1.3"/></svg>
<svg style="left:1591px;top:128px;" width="16" height="16" viewBox="0 0 16 16"><path d="M0.8 2.6 H6.5 L8 4.2 H15 V13.4 H0.8 Z" fill="#8e9499"/><circle cx="12" cy="12.5" r="5.2" fill="#3c3f41"/><rect x="11" y="7.6" width="2" height="9.8" fill="#40b6e0" transform="rotate(0 12 12.5)"/><rect x="11" y="7.6" width="2" height="9.8" fill="#40b6e0" transform="rotate(60 12 12.5)"/><rect x="11" y="7.6" width="2" height="9.8" fill="#40b6e0" transform="rotate(120 12 12.5)"/><circle cx="12" cy="12.5" r="3.3" fill="#40b6e0"/><circle cx="12" cy="12.5" r="1.3" fill="#3c3f41"/></svg>
<div style="left:1609px;top:124.80px;line-height:21px;font-size:13px;font-family:'Liberation Sans', sans-serif;color:#bbbbbb;white-space:pre;max-width:290px;overflow:hidden;letter-spacing:0px">Lifecycle</div>
<svg style="left:1574px;top:151px;" width="6" height="10" viewBox="0 0 6 10"><path d="M0.7 0.7 L5 5 L0.7 9.3" fill="none" stroke="#afb1b3" stroke-width="1.3"/></svg>
<svg style="left:1591px;top:148px;" width="16" height="16" viewBox="0 0 16 16"><path d="M0.8 2.6 H6.5 L8 4.2 H15 V13.4 H0.8 Z" fill="#8e9499"/><circle cx="12" cy="12.5" r="5.2" fill="#3c3f41"/><rect x="11" y="7.6" width="2" height="9.8" fill="#40b6e0" transform="rotate(0 12 12.5)"/><rect x="11" y="7.6" width="2" height="9.8" fill="#40b6e0" transform="rotate(60 12 12.5)"/><rect x="11" y="7.6" width="2" height="9.8" fill="#40b6e0" transform="rotate(120 12 12.5)"/><circle cx="12" cy="12.5" r="3.3" fill="#40b6e0"/><circle cx="12" cy="12.5" r="1.3" fill="#3c3f41"/></svg>
<div style="left:1609px;top:144.80px;line-height:21px;font-size:13px;font-family:'Liberation Sans', sans-serif;color:#bbbbbb;white-space:pre;max-width:290px;overflow:hidden;letter-spacing:0px">Plugins</div>
<svg style="left:1572px;top:173px;" width="10" height="6" viewBox="0 0 10 6"><path d="M0.7 0.7 L5 5 L9.3 0.7" fill="none" stroke="#afb1b3" stroke-width="1.3"/></svg>
<svg style="left:1591px;top:168px;" width="16" height="16" viewBox="0 0 16 16"><path d="M0.8 2.6 H6.5 L8 4.2 H15 V13.4 H0.8 Z" fill="#8e9499"/><rect x="6.5" y="6" width="10" height="11" fill="#3c3f41"/><rect x="7.5" y="11" width="2" height="6" fill="#62b543"/><rect x="10.5" y="8" width="2" height="9" fill="#afb1b3"/><rect x="13.5" y="9.5" width="2" height="7.5" fill="#40b6e0"/></svg>
<div style="left:1609px;top:164.80px;line-height:21px;font-size:13px;font-family:'Liberation Sans', sans-serif;color:#bbbbbb;white-space:pre;max-width:290px;overflow:hidden;letter-spacing:0px">Dependencies</div>
<svg style="left:1592px;top:191px;" width="6" height="10" viewBox="0 0 6 10"><path d="M0.7 0.7 L5 5 L0.7 9.3" fill="none" stroke="#afb1b3" stroke-width="1.3"/></svg>
<svg style="left:1609px;top:188px;" width="16" height="16" viewBox="0 0 16 16"><rect x="0" y="3" width="2" height="10" fill="#9ea3a8"/><rect x="3" y="3" width="2" height="10" fill="#62b543"/><rect x="6" y="1" width="2" height="12" fill="#9ea3a8"/><rect x="9" y="3" width="2" height="10" fill="#40b6e0"/><rect x="12" y="5" width="2" height="8" fill="#9ea3a8"/></svg>
<div style="left:1627px;top:184.80px;line-height:21px;font-size:13px;font-family:'Liberation Sans', sans-serif;color:#bbbbbb;white-space:pre;max-width:272px;overflow:hidden;letter-spacing:0.28px">org.springframework.boot:spring-boot-starter-security:2.5.0</div>
<svg style="left:1609px;top:208px;" width="16" height="16" viewBox="0 0 16 16"><rect x="0" y="3" width="2" height="10" fill="#9ea3a8"/><rect x="3" y="3" width="2" height="10" fill="#62b543"/><rect x="6" y="1" width="2" height="12" fill="#9ea3a8"/><rect x="9" y="3" width="2" height="10" fill="#40b6e0"/><rect x="12" y="5" width="2" height="8" fill="#9ea3a8"/></svg>
<div style="left:1627px;top:204.80px;line-height:21px;font-size:13px;font-family:'Liberation Sans', sans-serif;color:#bbbbbb;white-space:pre;max-width:272px;overflow:hidden;letter-spacing:0.28px">org.projectlombok:lombok:1.18.20</div>
<div style="left:1548px;top:226px;width:351px;height:20px;background:#0d293e;"></div>
<svg style="left:1590px;top:233px;" width="10" height="6" viewBox="0 0 10 6"><path d="M0.7 0.7 L5 5 L9.3 0.7" fill="none" stroke="#afb1b3" stroke-width="1.3"/></svg>
<svg style="left:1609px;top:228px;" width="16" height="16" viewBox="0 0 16 16"><rect x="0" y="3" width="2" height="10" fill="#9ea3a8"/><rect x="3" y="3" width="2" height="10" fill="#62b543"/><rect x="6" y="1" width="2" height="12" fill="#9ea3a8"/><rect x="9" y="3" width="2" height="10" fill="#40b6e0"/><rect x="12" y="5" width="2" height="8" fill="#9ea3a8"/></svg>
<div style="left:1627px;top:224.80px;line-height:21px;font-size:13px;font-family:'Liberation Sans', sans-serif;color:#bbbbbb;white-space:pre;max-width:272px;overflow:hidden;letter-spacing:0.28px">org.springframework.boot:spring-boot-starter-web:2.5.0</div>
<svg style="left:1627px;top:248px;" width="16" height="16" viewBox="0 0 16 16"><rect x="0" y="3" width="2" height="10" fill="#9ea3a8"/><rect x="3" y="3" width="2" height="10" fill="#62b543"/><rect x="6" y="1" width="2" height="12" fill="#9ea3a8"/><rect x="9" y="3" width="2" height="10" fill="#40b6e0"/><rect x="12" y="5" width="2" height="8" fill="#9ea3a8"/></svg>
<div style="left:1645px;top:244.80px;line-height:21px;font-size:13px;font-family:'Liberation Sans', sans-serif;color:#787878;white-space:pre;max-width:254px;overflow:hidden;letter-spacing:0.28px">org.springframework.boot:spring-boot-starter:2.5.0 (omitted for duplicate)</div>
<svg style="left:1610px;top:271px;" width="6" height="10" viewBox="0 0 6 10"><path d="M0.7 0.7 L5 5 L0.7 9.3" fill="none" stroke="#afb1b3" stroke-width="1.3"/></svg>
<svg style="left:1627px;top:268px;" width="16" height="16" viewBox="0 0 16 16"><rect x="0" y="3" width="2" height="10" fill="#9ea3a8"/><rect x="3" y="3" width="2" height="10" fill="#62b543"/><rect x="6" y="1" width="2" height="12" fill="#9ea3a8"/><rect x="9" y="3" width="2" height="10" fill="#40b6e0"/><rect x="12" y="5" width="2" height="8" fill="#9ea3a8"/></svg>
<div style="left:1645px;top:264.80px;line-height:21px;font-size:13px;font-family:'Liberation Sans', sans-serif;color:#bbbbbb;white-space:pre;max-width:254px;overflow:hidden;letter-spacing:0.28px">org.springframework:spring-aop:5.3.7</div>
<svg style="left:1610px;top:291px;" width="6" height="10" viewBox="0 0 6 10"><path d="M0.7 0.7 L5 5 L0.7 9.3" fill="none" stroke="#afb1b3" stroke-width="1.3"/></svg>
<svg style="left:1627px;top:288px;" width="16" height="16" viewBox="0 0 16 16"><rect x="0" y="3" width="2" height="10" fill="#9ea3a8"/><rect x="3" y="3" width="2" height="10" fill="#62b543"/><rect x="6" y="1" width="2" height="12" fill="#9ea3a8"/><rect x="9" y="3" width="2" height="10" fill="#40b6e0"/><rect x="12" y="5" width="2" height="8" fill="#9ea3a8"/></svg>
<div style="left:1645px;top:284.80px;line-height:21px;font-size:13px;font-family:'Liberation Sans', sans-serif;color:#bbbbbb;white-space:pre;max-width:254px;overflow:hidden;letter-spacing:0.28px">org.springframework.security:spring-security-config:5.5.0</div>
<svg style="left:1610px;top:311px;" width="6" height="10" viewBox="0 0 6 10"><path d="M0.7 0.7 L5 5 L0.7 9.3" fill="none" stroke="#afb1b3" stroke-width="1.3"/></svg>
<svg style="left:1627px;top:308px;" width="16" height="16" viewBox="0 0 16 16"><rect x="0" y="3" width="2" height="10" fill="#9ea3a8"/><rect x="3" y="3" width="2" height="10" fill="#62b543"/><rect x="6" y="1" width="2" height="12" fill="#9ea3a8"/><rect x="9" y="3" width="2" height="10" fill="#40b6e0"/><rect x="12" y="5" width="2" height="8" fill="#9ea3a8"/></svg>
<div style="left:1645px;top:304.80px;line-height:21px;font-size:13px;font-family:'Liberation Sans', sans-serif;color:#bbbbbb;white-space:pre;max-width:254px;overflow:hidden;letter-spacing:0.28px">org.springframework.security:spring-security-web:5.5.0</div>
<div style="left:1549px;top:372px;width:228px;height:9px;background:#4e5052;border-radius:1px"></div>
<svg style="left:1904px;top:40px;" width="12" height="12" viewBox="0 0 12 12"><ellipse cx="6" cy="2.5" rx="5" ry="2" fill="#afb1b3"/><path d="M1 4 V10 Q6 13 11 10 V4" fill="#afb1b3"/><path d="M1 6 Q6 8.5 11 6 M1 8.5 Q6 11 11 8.5" stroke="#3c3f41" stroke-width="0.8" fill="none"/></svg>
<div style="left:1914.5px;top:57px;width:0;height:0;"><div style="position:absolute;left:0;top:0;transform:rotate(90deg);transform-origin:0 0;font-family:'Liberation Sans';font-size:11.5px;line-height:14px;color:#afb1b3;white-space:pre">Database</div></div>
<div style="left:1904px;top:123px;font-family:'Liberation Sans', sans-serif;font-size:14px;line-height:16px;font-style:italic;font-weight:bold;color:#afb1b3">m</div>
<div style="left:1915.5px;top:143px;width:0;height:0;"><div style="position:absolute;left:0;top:0;transform:rotate(90deg);transform-origin:0 0;font-family:'Liberation Sans';font-size:12px;line-height:14px;color:#dfe1e5;white-space:pre">Maven</div></div>
<div style="left:28px;top:386.00px;line-height:21px;font-size:13px;font-family:'Liberation Sans', sans-serif;color:#bbbbbb;white-space:pre;">Debug:</div>
<svg style="left:89px;top:388px;" width="16" height="17" viewBox="0 0 16 17"><path d="M1 14 C0.5 7 5 2.5 14 1.5 C14 9 9.5 13.5 1 14 Z" fill="#4f7d45"/><path d="M2 13 L9 6" stroke="#3c3f41" stroke-width="0.7"/><polygon points="10.5,8.5 14.2,10.6 14.2,14.9 10.5,17 6.8,14.9 6.8,10.6" fill="#5d6d72" stroke="#8d9ca1" stroke-width="1"/><circle cx="10.5" cy="12.8" r="1.6" fill="none" stroke="#a9b6ba" stroke-width="0.8"/></svg>
<div style="left:109px;top:386.00px;line-height:21px;font-size:13px;font-family:'Liberation Sans', sans-serif;color:#bbbbbb;white-space:pre;">SecurityApplication</div>
<svg style="left:226px;top:392px;" width="8" height="8" viewBox="0 0 8 8"><path d="M0.5 0.5 L7.5 7.5 M7.5 0.5 L0.5 7.5" stroke="#767a7c" stroke-width="1.1"/></svg>
<div style="left:77px;top:407px;width:168px;height:3px;background:#747a80;"></div>
<svg style="left:1854px;top:390px;" width="12" height="12" viewBox="0 0 12 12"><rect x="4.44" y="0" width="3.12" height="12" rx="0.6" fill="#afb1b3" transform="rotate(0 6.0 6.0)"/><rect x="4.44" y="0" width="3.12" height="12" rx="0.6" fill="#afb1b3" transform="rotate(60 6.0 6.0)"/><rect x="4.44" y="0" width="3.12" height="12" rx="0.6" fill="#afb1b3" transform="rotate(120 6.0 6.0)"/><circle cx="6.0" cy="6.0" r="4.44" fill="#afb1b3"/><circle cx="6.0" cy="6.0" r="1.80" fill="#3c3f41"/></svg>
<div style="left:1880px;top:395px;width:11px;height:2px;background:#afb1b3;"></div>
<div style="left:64px;top:414.34px;line-height:19px;font-size:12px;font-family:'Liberation Sans', sans-serif;color:#bbbbbb;white-space:pre;">Debugger</div>
<div style="left:141px;top:414.34px;line-height:19px;font-size:12px;font-family:'Liberation Sans', sans-serif;color:#bbbbbb;white-space:pre;">Console</div>
<div style="left:128px;top:436px;width:68px;height:2px;background:#747a80;"></div>
<svg style="left:208px;top:416px;" width="15" height="15" viewBox="0 0 15 15"><path d="M3 12 L7.5 3 L12 12" fill="none" stroke="#c75c2e" stroke-width="1.5"/><circle cx="7.5" cy="3" r="2.3" fill="#d2652f"/><circle cx="2.8" cy="12" r="2.5" fill="#d2652f"/><circle cx="12.2" cy="12" r="2.5" fill="#d2652f"/></svg>
<div style="left:227px;top:413.67px;line-height:20px;font-size:12.5px;font-family:'Liberation Sans', sans-serif;color:#bbbbbb;white-space:pre;">Actuator</div>
<svg style="left:288px;top:418px;" width="13" height="11" viewBox="0 0 13 11"><path d="M0 1 H13 M0 5.5 H13 M0 10 H13" stroke="#5e6163" stroke-width="2"/></svg>
<div style="left:310px;top:413px;width:1px;height:20px;background:#515355;"></div>
<svg style="left:320px;top:417px;" width="14" height="13" viewBox="0 0 14 13"><path d="M1 7 L6 2 L11 7" fill="none" stroke="#5e6163" stroke-width="1.8"/><path d="M9 4 H13 V8" fill="none" stroke="#5e6163" stroke-width="1.6"/><path d="M0 12 H12" stroke="#5e6163" stroke-width="1.8"/></svg>
<svg style="left:347px;top:416px;" width="12" height="14" viewBox="0 0 12 14"><path d="M6 0 V8" stroke="#5e6163" stroke-width="1.8"/><path d="M2 5 L6 9 L10 5" fill="none" stroke="#5e6163" stroke-width="1.8"/><path d="M0 12.5 H12" stroke="#5e6163" stroke-width="1.8"/></svg>
<svg style="left:373px;top:416px;" width="12" height="14" viewBox="0 0 12 14"><path d="M6 0 V8" stroke="#5e6163" stroke-width="1.8"/><path d="M2 5 L6 9 L10 5" fill="none" stroke="#5e6163" stroke-width="1.8"/><path d="M0 12.5 H12" stroke="#5e6163" stroke-width="1.8"/></svg>
<svg style="left:399px;top:416px;" width="12" height="14" viewBox="0 0 12 14"><path d="M6 2 V11" stroke="#5e6163" stroke-width="1.8"/><path d="M2 5 L6 1 L10 5" fill="none" stroke="#5e6163" stroke-width="1.8"/><path d="M0 12.5 H12" stroke="#5e6163" stroke-width="1.8"/></svg>
<svg style="left:424px;top:416px;" width="15" height="14" viewBox="0 0 15 14"><path d="M1 1 L8 8" stroke="#5e6163" stroke-width="1.8"/><path d="M3 8 H8 V3" fill="none" stroke="#5e6163" stroke-width="1.8"/><path d="M12 6 V14 M10.5 6 H13.5 M10.5 14 H13.5" stroke="#5e6163" stroke-width="1"/></svg>
<div style="left:447px;top:413px;width:1px;height:20px;background:#515355;"></div>
<svg style="left:458px;top:417px;" width="12" height="12" viewBox="0 0 12 12"><rect x="0.8" y="0.8" width="10.4" height="10.4" fill="none" stroke="#5e6163" stroke-width="1.6"/><path d="M0 4 H12 M4 4 V12 M8 4 V12 M0 8 H12" stroke="#5e6163" stroke-width="1.2"/></svg>
<svg style="left:484px;top:417px;" width="12" height="12" viewBox="0 0 12 12"><path d="M0 1 H5 M7 1 H12 M0 6 H4 M8 6 H12 M0 11 H5 M7 11 H12" stroke="#5e6163" stroke-width="1.6"/><path d="M4 10 L8 2" stroke="#5e6163" stroke-width="1.3"/></svg>
<svg style="left:1881px;top:417px;" width="18" height="17" viewBox="0 0 18 17"><rect x="0" y="0" width="7" height="5" fill="#afb1b3"/><rect x="8" y="0" width="4" height="5" fill="#afb1b3"/><rect x="0" y="6" width="12" height="4.5" fill="#afb1b3"/><path d="M11 13 H17 L14 16 Z" fill="#dfe1e5"/></svg>
<svg style="left:29px;top:417px;" width="14" height="16" viewBox="0 0 14 16"><path d="M4 1 L5.5 3.5 M10 1 L8.5 3.5" stroke="#499c54" stroke-width="1.4"/><ellipse cx="7" cy="8.8" rx="5" ry="5.6" fill="#499c54"/><path d="M0 6.5 H2.5 M11.5 6.5 H14 M0 10 H2.5 M11.5 10 H14 M0.5 13 H3 M11 13 H13.5" stroke="#499c54" stroke-width="1.5"/><path d="M4.2 7.5 H9.8 M4.2 10.5 H9.8" stroke="#3c3f41" stroke-width="1.3"/></svg>
<svg style="left:29px;top:443px;" width="14" height="14" viewBox="0 0 14 14"><path d="M1.5 12.5 L7 7" stroke="#afb1b3" stroke-width="2.4"/><path d="M6 6 A4 4 0 0 1 11.5 0.5 L9 3 L10.5 4.5 L13 2 A4 4 0 0 1 8 7.5 Z" fill="#afb1b3"/></svg>
<div style="left:26px;top:466px;width:20px;height:1px;background:#515355;"></div>
<svg style="left:30px;top:477px;" width="12" height="12" viewBox="0 0 12 12"><rect x="0" y="0" width="2.5" height="12" fill="#5e6163"/><path d="M4 0 L12 6 L4 12 Z" fill="#5e6163"/></svg>
<svg style="left:31px;top:503px;" width="10" height="11" viewBox="0 0 10 11"><rect x="0" y="0" width="3" height="11" fill="#5e6163"/><rect x="6" y="0" width="3" height="11" fill="#5e6163"/></svg>
<div style="left:31px;top:530px;width:10px;height:10px;background:#5e6163;"></div>
<div style="left:26px;top:551px;width:20px;height:1px;background:#515355;"></div>
<svg style="left:29px;top:561px;" width="14" height="13" viewBox="0 0 14 13"><circle cx="9" cy="4.5" r="4" fill="#db5c5c"/><circle cx="5" cy="8.5" r="4.5" fill="#db5c5c" stroke="#3c3f41" stroke-width="1"/></svg>
<svg style="left:29px;top:588px;" width="14" height="13" viewBox="0 0 14 13"><circle cx="7" cy="6.5" r="5" fill="#a54444"/><path d="M1 12.5 L13 0.5" stroke="#afb1b3" stroke-width="1.6"/></svg>
<div style="left:26px;top:610px;width:20px;height:1px;background:#515355;"></div>
<svg style="left:29px;top:621px;" width="14" height="12" viewBox="0 0 14 12"><path d="M0 3 H3.5 L5 1 H9 L10.5 3 H14 V12 H0 Z" fill="#5e6163"/><circle cx="7" cy="7" r="2.5" fill="#3c3f41"/></svg>
<div style="left:26px;top:643px;width:20px;height:1px;background:#515355;"></div>
<svg style="left:29px;top:653px;" width="13" height="13" viewBox="0 0 13 13"><rect x="4.81" y="0" width="3.38" height="13" rx="0.6" fill="#afb1b3" transform="rotate(0 6.5 6.5)"/><rect x="4.81" y="0" width="3.38" height="13" rx="0.6" fill="#afb1b3" transform="rotate(60 6.5 6.5)"/><rect x="4.81" y="0" width="3.38" height="13" rx="0.6" fill="#afb1b3" transform="rotate(120 6.5 6.5)"/><circle cx="6.5" cy="6.5" r="4.81" fill="#afb1b3"/><circle cx="6.5" cy="6.5" r="1.95" fill="#3c3f41"/></svg>
<svg style="left:38px;top:664px;" width="6" height="4" viewBox="0 0 6 4"><path d="M0 0 H6 L3 3.5 Z" fill="#dfe1e5"/></svg>
<div style="left:26px;top:676px;width:20px;height:1px;background:#515355;"></div>
<svg style="left:29px;top:686px;" width="14" height="14" viewBox="0 0 14 14"><path d="M7 2 L12 7 L9.5 7.5 L6.5 10.5 L6 13 L1 8 L3.5 7.5 L6.5 4.5 Z" fill="#afb1b3"/><path d="M0.5 13.5 L4 10" stroke="#afb1b3" stroke-width="1.6"/></svg>
<svg style="left:59px;top:447px;" width="12" height="13" viewBox="0 0 12 13"><path d="M6 2 V13" stroke="#afb1b3" stroke-width="1.7"/><path d="M1.5 6 L6 1.5 L10.5 6" fill="none" stroke="#afb1b3" stroke-width="1.7"/></svg>
<svg style="left:59px;top:473px;" width="12" height="13" viewBox="0 0 12 13"><path d="M6 0 V11" stroke="#afb1b3" stroke-width="1.7"/><path d="M1.5 7 L6 11.5 L10.5 7" fill="none" stroke="#afb1b3" stroke-width="1.7"/></svg>
<svg style="left:58px;top:499px;" width="14" height="14" viewBox="0 0 14 14"><path d="M0 1.5 H13 M0 6 H10.5 A2.5 2.5 0 0 1 10.5 11 H6 M0 10.5 H3" fill="none" stroke="#afb1b3" stroke-width="1.6"/><path d="M7 8.5 L4.5 11 L7 13.5" fill="none" stroke="#afb1b3" stroke-width="1.4"/></svg>
<div style="left:54px;top:520px;width:22px;height:22px;background:#4c5052;border-radius:3px"></div>
<svg style="left:58px;top:524px;" width="14" height="14" viewBox="0 0 14 14"><path d="M0 1.5 H5 M0 5.5 H5 M0 9.5 H5 M0 13 H14" stroke="#afb1b3" stroke-width="1.6"/><path d="M10 0 V9" stroke="#afb1b3" stroke-width="1.6"/><path d="M7 6 L10 9.5 L13 6" fill="none" stroke="#afb1b3" stroke-width="1.6"/></svg>
<svg style="left:58px;top:551px;" width="14" height="13" viewBox="0 0 14 13"><rect x="3" y="0" width="8" height="3" fill="#afb1b3"/><rect x="0" y="4" width="14" height="6" fill="#afb1b3"/><rect x="3" y="8" width="8" height="5" fill="#afb1b3" stroke="#3c3f41" stroke-width="1"/></svg>
<svg style="left:59px;top:576px;" width="12" height="13" viewBox="0 0 12 13"><rect x="0" y="1.5" width="12" height="2" fill="#afb1b3"/><rect x="4" y="0" width="4" height="2" fill="#afb1b3"/><path d="M1.5 4.5 H10.5 L9.5 13 H2.5 Z" fill="#afb1b3"/></svg>
<div style="left:92px;top:439.27px;line-height:22px;font-size:14px;font-family:'Liberation Mono', monospace;color:#bbbbbb;white-space:pre;letter-spacing:-0.4px;">&quot;C:\Program Files\Java\jdk1.8.0_131\bin\java.exe&quot; ...</div>
<div style="left:92px;top:461.27px;line-height:22px;font-size:14px;font-family:'Liberation Mono', monospace;color:#bbbbbb;white-space:pre;letter-spacing:-0.4px;">Connected to the target VM, address: &#x27;127.0.0.1:65122&#x27;, transport: &#x27;socket&#x27;</div>
<div style="left:92px;top:505.27px;line-height:22px;font-size:14px;font-family:'Liberation Mono', monospace;color:#bbbbbb;white-space:pre;letter-spacing:-0.4px;">  .   ____          _            __ _ _</div>
<div style="left:92px;top:527.27px;line-height:22px;font-size:14px;font-family:'Liberation Mono', monospace;color:#bbbbbb;white-space:pre;letter-spacing:-0.4px;"> /\\ / ___&#x27;_ __ _ _(_)_ __  __ _ \ \ \ \</div>
<div style="left:92px;top:549.27px;line-height:22px;font-size:14px;font-family:'Liberation Mono', monospace;color:#bbbbbb;white-space:pre;letter-spacing:-0.4px;">( ( )\___ | &#x27;_ | &#x27;_| | &#x27;_ \/ _` | \ \ \ \</div>
<div style="left:92px;top:571.27px;line-height:22px;font-size:14px;font-family:'Liberation Mono', monospace;color:#bbbbbb;white-space:pre;letter-spacing:-0.4px;"> \\/  ___)| |_)| | | | | || (_| |  ) ) ) )</div>
<div style="left:92px;top:593.27px;line-height:22px;font-size:14px;font-family:'Liberation Mono', monospace;color:#bbbbbb;white-space:pre;letter-spacing:-0.4px;">  &#x27;  |____| .__|_| |_|_| |_\__, | / / / /</div>
<div style="left:92px;top:615.27px;line-height:22px;font-size:14px;font-family:'Liberation Mono', monospace;color:#bbbbbb;white-space:pre;letter-spacing:-0.4px;"> =========|_|==============|___/=/_/_/_/</div>
<div style="left:92px;top:637.27px;line-height:22px;font-size:14px;font-family:'Liberation Mono', monospace;color:#5f9e3c;white-space:pre;letter-spacing:-0.4px;"> :: Spring Boot :: </div>
<div style="left:244px;top:637.27px;line-height:22px;font-size:14px;font-family:'Liberation Mono', monospace;color:#bbbbbb;white-space:pre;letter-spacing:-0.4px;">               (v2.5.0)</div>
<div style="left:92px;top:681.27px;line-height:22px;font-size:14px;font-family:'Liberation Mono', monospace;color:#bbbbbb;white-space:pre;letter-spacing:-0.4px;">2024-08-20 03:06:14.315  </div>
<div style="left:292px;top:681.27px;line-height:22px;font-size:14px;font-family:'Liberation Mono', monospace;color:#5f9e3c;white-space:pre;letter-spacing:-0.4px;">INFO</div>
<div style="left:332px;top:681.27px;line-height:22px;font-size:14px;font-family:'Liberation Mono', monospace;color:#9876aa;white-space:pre;letter-spacing:-0.4px;">26252</div>
<div style="left:372px;top:681.27px;line-height:22px;font-size:14px;font-family:'Liberation Mono', monospace;color:#bbbbbb;white-space:pre;letter-spacing:-0.4px;"> --- [           main] </div>
<div style="left:556px;top:681.27px;line-height:22px;font-size:14px;font-family:'Liberation Mono', monospace;color:#2aa198;white-space:pre;letter-spacing:-0.4px;">com.wsm.SecurityApplication             </div>
<div style="left:876px;top:681.27px;line-height:22px;font-size:14px;font-family:'Liberation Mono', monospace;color:#bbbbbb;white-space:pre;letter-spacing:-0.4px;"> : </div>
<div style="left:900px;top:681.27px;line-height:22px;font-size:14px;font-family:'Liberation Mono', monospace;color:#bbbbbb;white-space:pre;letter-spacing:-0.4px;">Starting SecurityApplication using Java 1.8.0_131 on WSM with PID 26252 (</div>
<div style="left:1484px;top:681.27px;line-height:22px;font-size:14px;font-family:'Liberation Mono', monospace;color:#287bde;white-space:pre;letter-spacing:-0.4px;text-decoration:underline">D:\CodeWord\IDEAPoject\WSecurity\target\classes</div>
<div style="left:1860px;top:681.27px;line-height:22px;font-size:14px;font-family:'Liberation Mono', monospace;color:#bbbbbb;white-space:pre;letter-spacing:-0.4px;"> star</div>
<div style="left:92px;top:703.27px;line-height:22px;font-size:14px;font-family:'Liberation Mono', monospace;color:#bbbbbb;white-space:pre;letter-spacing:-0.4px;">2024-08-20 03:06:14.317  </div>
<div style="left:292px;top:703.27px;line-height:22px;font-size:14px;font-family:'Liberation Mono', monospace;color:#5f9e3c;white-space:pre;letter-spacing:-0.4px;">INFO</div>
<div style="left:332px;top:703.27px;line-height:22px;font-size:14px;font-family:'Liberation Mono', monospace;color:#9876aa;white-space:pre;letter-spacing:-0.4px;">26252</div>
<div style="left:372px;top:703.27px;line-height:22px;font-size:14px;font-family:'Liberation Mono', monospace;color:#bbbbbb;white-space:pre;letter-spacing:-0.4px;"> --- [           main] </div>
<div style="left:556px;top:703.27px;line-height:22px;font-size:14px;font-family:'Liberation Mono', monospace;color:#2aa198;white-space:pre;letter-spacing:-0.4px;">com.wsm.SecurityApplication             </div>
<div style="left:876px;top:703.27px;line-height:22px;font-size:14px;font-family:'Liberation Mono', monospace;color:#bbbbbb;white-space:pre;letter-spacing:-0.4px;"> : </div>
<div style="left:900px;top:703.27px;line-height:22px;font-size:14px;font-family:'Liberation Mono', monospace;color:#bbbbbb;white-space:pre;letter-spacing:-0.4px;">No active profile set, falling back to default profiles: default</div>
<div style="left:92px;top:725.27px;line-height:22px;font-size:14px;font-family:'Liberation Mono', monospace;color:#bbbbbb;white-space:pre;letter-spacing:-0.4px;">2024-08-20 03:06:14.363  </div>
<div style="left:292px;top:725.27px;line-height:22px;font-size:14px;font-family:'Liberation Mono', monospace;color:#b09a35;white-space:pre;letter-spacing:-0.4px;">WARN</div>
<div style="left:332px;top:725.27px;line-height:22px;font-size:14px;font-family:'Liberation Mono', monospace;color:#9876aa;white-space:pre;letter-spacing:-0.4px;">26252</div>
<div style="left:372px;top:725.27px;line-height:22px;font-size:14px;font-family:'Liberation Mono', monospace;color:#bbbbbb;white-space:pre;letter-spacing:-0.4px;"> --- [kground-preinit] </div>
<div style="left:556px;top:725.27px;line-height:22px;font-size:14px;font-family:'Liberation Mono', monospace;color:#2aa198;white-space:pre;letter-spacing:-0.4px;">o.s.h.c.j.Jackson2ObjectMapperBuilder   </div>
<div style="left:876px;top:725.27px;line-height:22px;font-size:14px;font-family:'Liberation Mono', monospace;color:#bbbbbb;white-space:pre;letter-spacing:-0.4px;"> : </div>
<div style="left:900px;top:725.27px;line-height:22px;font-size:14px;font-family:'Liberation Mono', monospace;color:#bbbbbb;white-space:pre;letter-spacing:-0.4px;">For Jackson Kotlin classes support please add &quot;com.fasterxml.jackson.module:jackson-module-kotlin&quot; to the classpath</div>
<div style="left:92px;top:747.27px;line-height:22px;font-size:14px;font-family:'Liberation Mono', monospace;color:#bbbbbb;white-space:pre;letter-spacing:-0.4px;">                                        [           main]</div>
<div style="left:1898px;top:437px;width:1px;height:315px;background:#2b2b2b;"></div>
<div style="left:1899px;top:383px;width:15px;height:369px;background:#3c3f41;"></div>
<div style="left:1899px;top:383px;width:1px;height:369px;background:#2b2b2b;"></div>
<div style="left:1890px;top:438px;width:8px;height:143px;background:#4b4943;"></div>
</body></html>
